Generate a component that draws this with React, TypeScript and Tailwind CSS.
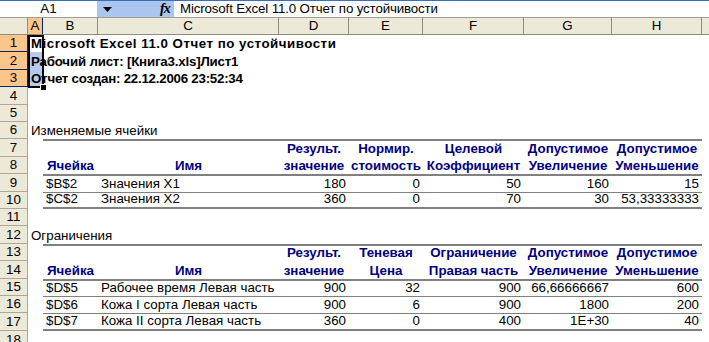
import React from 'react'

type Cell = { t?: string; a?: 'l' | 'r' | 'c'; h?: boolean; b?: boolean; k?: string }

const cols = ['A', 'B', 'C', 'D', 'E', 'F', 'G', 'H', '']
const colCls = [
  'w-[15px]',
  'w-[55px]',
  'w-[181px]',
  'w-[70px]',
  'w-[74px]',
  'w-[101px]',
  'w-[88px]',
  'w-[90px]',
  'w-[40px]',
]
const rowH = [17, 18, 17, 18, 17, 17, 18, 17, 18, 17, 17, 18, 17, 18, 17, 17, 18, 18]
const hCls: Record<number, string> = { 17: 'h-[17px]', 18: 'h-[18px]' }

const hd = (t: string): Cell => ({ t, h: true, a: 'c' })
const num = (t: string): Cell => ({ t, a: 'r' })
const txt = (t: string): Cell => ({ t })

const rows: Record<number, Cell[]> = {
  1: [{ t: 'Microsoft Excel 11.0 Отчет по устойчивости', b: true, k: 'tracking-[0.5px]' }],
  2: [{ t: 'Рабочий лист: [Книга3.xls]Лист1', b: true, k: 'tracking-[-0.2px]' }],
  3: [{ t: 'Отчет создан: 22.12.2006 23:52:34', b: true, k: 'tracking-[-0.25px]' }],
  6: [txt('Изменяемые ячейки')],
  7: [{}, {}, {}, hd('Результ.'), hd('Нормир.'), hd('Целевой'), hd('Допустимое'), hd('Допустимое')],
  8: [{}, hd('Ячейка'), hd('Имя'), hd('значение'), hd('стоимость'), hd('Коэффициент'), hd('Увеличение'), hd('Уменьшение')],
  9: [{}, txt('$B$2'), txt('Значения X1'), num('180'), num('0'), num('50'), num('160'), num('15')],
  10: [{}, txt('$C$2'), txt('Значения X2'), num('360'), num('0'), num('70'), num('30'), num('53,33333333')],
  12: [txt('Ограничения')],
  13: [{}, {}, {}, hd('Результ.'), hd('Теневая'), hd('Ограничение'), hd('Допустимое'), hd('Допустимое')],
  14: [{}, hd('Ячейка'), hd('Имя'), hd('значение'), hd('Цена'), hd('Правая часть'), hd('Увеличение'), hd('Уменьшение')],
  15: [{}, txt('$D$5'), txt('Рабочее время Левая часть'), num('900'), num('32'), num('900'), num('66,66666667'), num('600')],
  16: [{}, txt('$D$6'), txt('Кожа I  сорта Левая часть'), num('900'), num('6'), num('900'), num('1800'), num('200')],
  17: [{}, txt('$D$7'), txt('Кожа II сорта Левая часть'), num('360'), num('0'), num('400'), num('1E+30'), num('40')],
}

// table rules, applied to columns B..H
const lineCls: Record<number, string> = {
  7: 'border-t-2 border-[#808080]',
  9: 'border-t-2 border-[#808080]',
  10: 'border-t border-b-2 border-[#808080]',
  13: 'border-t-2 border-[#808080]',
  15: 'border-t-2 border-[#808080]',
  16: 'border-t border-[#808080]',
  17: 'border-t border-b-2 border-[#808080]',
}

function FormulaBar() {
  return (
    <div className="flex h-[18px] shrink-0 border-t border-b border-t-[#3d6db5] border-b-[#a09e94] bg-white">
      <div className="flex w-[97px] items-center justify-center">A1</div>
      <div className="relative flex w-[77px] items-center bg-[#aac5ef]">
        <svg className="ml-[6px]" width="9" height="5" viewBox="0 0 9 5">
          <path d="M0 0h9L4.5 5z" fill="#000" />
        </svg>
        <span className="ml-[48px] font-['Liberation_Serif',serif] text-[14px] font-bold italic leading-none tracking-[-1px]">
          fx
        </span>
      </div>
      <div className="flex flex-1 items-center whitespace-nowrap pl-[6px] tracking-[-0.15px]">
        Microsoft Excel 11.0 Отчет по устойчивости
      </div>
    </div>
  )
}

function ColumnHeaders() {
  return (
    <div className="flex h-[17px] shrink-0 border-b border-[#8f8c7a] bg-[#ece9d8]">
      <div className="w-[28px] shrink-0 border-r border-[#8f8c7a]" />
      {cols.map((c, i) => (
        <div
          key={i}
          className={`${colCls[i]} flex shrink-0 items-center justify-center border-r ${
            i === 0 ? 'border-[#0a246a] bg-[#fcc68a]' : 'border-[#8f8c7a]'
          }`}
        >
          {c}
        </div>
      ))}
    </div>
  )
}

function SheetRow({ n }: { n: number }) {
  const cells = rows[n] ?? []
  const sel = n <= 3
  return (
    <div className={`flex shrink-0 ${hCls[rowH[n - 1]]}`}>
      <div
        className={`flex w-[28px] shrink-0 items-center justify-center border-r border-b ${
          sel ? 'border-[#0a246a] bg-[#fcc68a]' : 'border-[#aca899] bg-[#ece9d8]'
        }`}
      >
        {n}
      </div>
      {cols.map((_, i) => {
        const cell = cells[i] ?? {}
        const lines = i >= 1 && i <= 7 ? lineCls[n] ?? '' : ''
        const bg = i === 0 && (n === 2 || n === 3) ? 'bg-[#b6caec]' : ''
        const align =
          cell.a === 'r' ? 'justify-end' : cell.a === 'c' ? 'justify-center' : 'justify-start'
        return (
          <div
            key={i}
            className={`${colCls[i]} ${lines} ${bg} ${align} ${cell.k ?? ''} flex shrink-0 items-end whitespace-nowrap px-[3px] pb-[1px] leading-[15px] ${
              cell.h ? 'font-bold text-[#000080]' : ''
            } ${cell.b ? 'font-bold' : ''}`}
          >
            {cell.t}
          </div>
        )
      })}
    </div>
  )
}

export default function App() {
  return (
    <div className="flex h-[342px] w-[709px] flex-col overflow-hidden bg-white font-['Liberation_Sans',Arial,sans-serif] text-[13.33px] text-black">
      <FormulaBar />
      <ColumnHeaders />
      <div className="relative flex flex-col">
        {rowH.map((_, i) => (
          <SheetRow key={i} n={i + 1} />
        ))}
        {/* selection A1:A3 */}
        <div className="absolute left-[28px] top-0 h-[53px] w-[16px] border-2 border-black" />
        <div className="absolute left-[41px] top-[50px] h-[5px] w-[5px] bg-black outline outline-1 outline-white" />
      </div>
    </div>
  )
}
